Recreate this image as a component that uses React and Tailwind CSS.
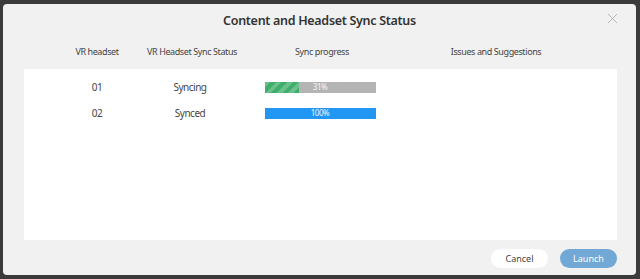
import React from "react";

const rows = [
  { id: "01", status: "Syncing", progress: 31, done: false },
  { id: "02", status: "Synced", progress: 100, done: true },
];

const ProgressBar = ({ value, done }) => (
  <div className="relative w-[111px] h-[11px] bg-[#b4b4b4] overflow-hidden">
    <div
      className={
        done
          ? "h-full bg-[#2196f3]"
          : "h-full bg-[#3fae6a] bg-[repeating-linear-gradient(135deg,rgba(255,255,255,0.22)_0px,rgba(255,255,255,0.22)_4px,transparent_4px,transparent_8px)]"
      }
      style={{ width: `${value}%` }}
    />
    <span className="absolute inset-0 flex items-center justify-center text-[8px] leading-none text-white/90">
      {value}%
    </span>
  </div>
);

const App = () => {
  return (
    <div className="w-[640px] h-[279px] bg-[#3b3b3b] pt-[4px] pl-[3px] font-['Noto_Sans',sans-serif]">
      <div className="relative w-[633px] h-[271px] bg-[#f1f1f1] rounded-[4px] flex flex-col">
        <button className="absolute right-[18px] top-[9px] text-[#b5b5b5]">
          <svg width="11" height="11" viewBox="0 0 11 11" fill="none" stroke="currentColor" strokeWidth="1">
            <path d="M1 1L10 10M10 1L1 10" />
          </svg>
        </button>

        <h1 className="text-center text-[12.5px] font-semibold tracking-[-0.3px] text-[#333] mt-[6px] leading-[22px]">
          Content and Headset Sync Status
        </h1>

        <div className="flex ml-[21px] mt-[13px] text-[9px] tracking-[-0.4px] text-[#444] leading-[14px] whitespace-nowrap">
          <div className="w-[100px] ml-[23px] text-center">VR headset</div>
          <div className="w-[86px] text-center">VR Headset Sync Status</div>
          <div className="w-[178px] text-center">Sync progress</div>
          <div className="w-[170px] text-center">Issues and Suggestions</div>
        </div>

        <div className="ml-[21px] mt-[10px] w-[593px] h-[171px] bg-white pt-[5px]">
          {rows.map((r) => (
            <div key={r.id} className="flex items-center h-[26px] text-[10px] tracking-[-0.5px] text-[#444] whitespace-nowrap">
              <div className="w-[100px] ml-[23px] text-center">{r.id}</div>
              <div className="w-[86px] text-center">{r.status}</div>
              <div className="w-[178px] flex justify-center pr-[4px]">
                <ProgressBar value={r.progress} done={r.done} />
              </div>
              <div className="w-[170px]" />
            </div>
          ))}
        </div>

        <div className="flex justify-end gap-[12px] mr-[19px] mt-[9px]">
          <button className="w-[57px] h-[19px] rounded-full bg-white text-[9px] text-[#444]">
            Cancel
          </button>
          <button className="w-[57px] h-[19px] rounded-full bg-[#72a8d5] text-[9px] text-white">
            Launch
          </button>
        </div>
      </div>
    </div>
  );
};

export default App;
